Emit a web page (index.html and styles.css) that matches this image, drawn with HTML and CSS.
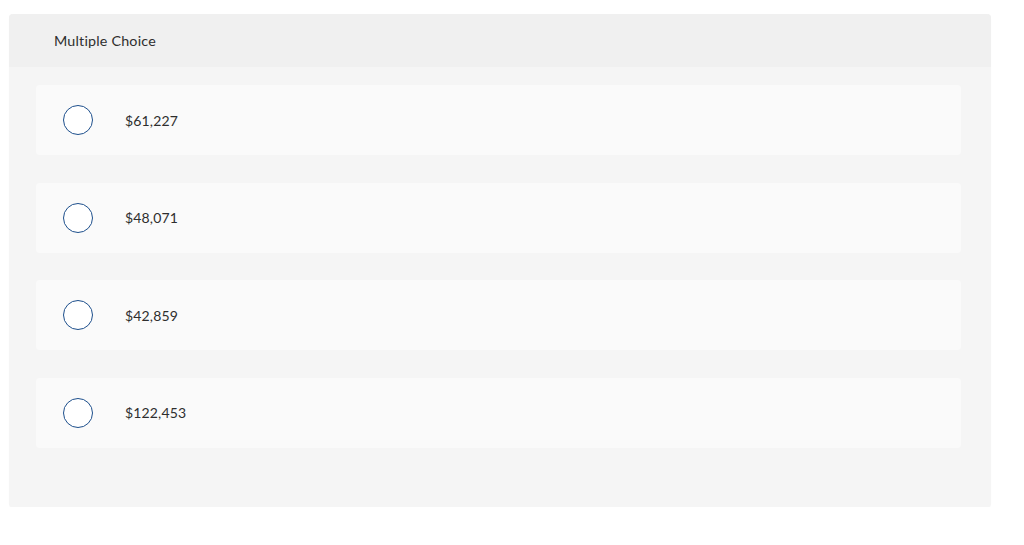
FILE: index.html
```html
<!DOCTYPE html>
<html>
<head>
<meta charset="utf-8">
<link rel="stylesheet" href="styles.css">
</head>
<body>
<div class="card">
  <div class="card-header">Multiple Choice</div>
  <div class="card-body">
    <div class="option"><span class="radio"></span><span class="label">$61,227</span></div>
    <div class="option"><span class="radio"></span><span class="label">$48,071</span></div>
    <div class="option"><span class="radio"></span><span class="label">$42,859</span></div>
    <div class="option"><span class="radio"></span><span class="label">$122,453</span></div>
  </div>
</div>
</body>
</html>
```
FILE: styles.css
```css
html, body {
  margin: 0;
  padding: 0;
  background: #ffffff;
}
body {
  font-family: "Lato", "Open Sans", "Liberation Sans", sans-serif;
  color: #2e2e2e;
}
.card {
  margin: 14px 0 0 9px;
  width: 982px;
  background: #f5f5f5;
  border-radius: 4px;
  overflow: hidden;
  box-shadow: 0 1px 1px rgba(0,0,0,0.04);
}
.card-header {
  height: 53px;
  display: flex;
  align-items: center;
  padding-left: 45px;
  background: #f0f0f0;
  font-size: 14.3px;
  letter-spacing: 0.2px;
}
.card-body {
  display: flex;
  flex-direction: column;
  gap: 27.5px;
  padding: 18px 30px 59px 27px;
}
.option {
  height: 70px;
  display: flex;
  align-items: center;
  padding-left: 27px;
  background: #fafafa;
  border-radius: 4px;
}
.radio {
  width: 28px;
  height: 28px;
  border: 1.3px solid #1d4f8c;
  border-radius: 50%;
  background: #ffffff;
  flex-shrink: 0;
}
.label {
  margin-left: 32px;
  font-size: 14px;
  letter-spacing: 0.15px;
}
```
